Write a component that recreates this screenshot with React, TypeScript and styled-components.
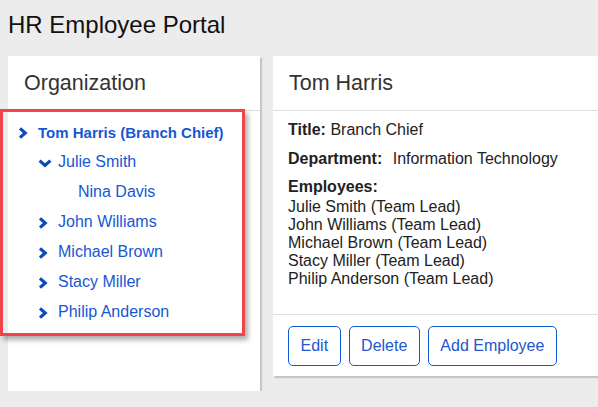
import React from 'react';
import styled, { createGlobalStyle } from 'styled-components';

const GlobalStyle = createGlobalStyle`
  html, body {
    margin: 0;
    background: #ececec;
    font-family: 'Liberation Sans', Arial, sans-serif;
    overflow: hidden;
  }
`;

const Page = styled.div`
  padding: 11px 0 0 8px;
`;

const PageTitle = styled.h1`
  margin: 0 0 17px;
  font-size: 24px;
  font-weight: 400;
  color: #111;
`;

const Columns = styled.div`
  display: flex;
  align-items: flex-start;
  gap: 13px;
`;

const Panel = styled.section<{ $width: number }>`
  width: ${(p) => p.$width}px;
  flex: none;
  background: #fff;
  box-shadow: 2px 2px 1px rgba(0, 0, 0, 0.16);
`;

const PanelHeader = styled.header`
  height: 54px;
  display: flex;
  align-items: center;
  padding: 0 15px 0 16px;
  border-bottom: 1px solid #dedede;
  font-size: 21.5px;
  color: #333;
`;

const TreeBox = styled.div`
  margin: -2px 15px 55px -8px;
  padding: 5px 0 6px 15px;
  border: 3px solid #f2444a;
  box-shadow: 3px 4px 5px rgba(0, 0, 0, 0.32);
  position: relative;
`;

const TreeRow = styled.div<{ $level: number }>`
  height: 30px;
  display: flex;
  align-items: center;
  padding-left: ${(p) => p.$level * 20}px;
`;

const Toggle = styled.span`
  width: 20px;
  flex: none;
  display: flex;
  align-items: center;
  padding-top: 2px;
  color: #0b49bd;
`;

const NodeLabel = styled.a<{ $bold?: boolean }>`
  font-size: ${(p) => (p.$bold ? 15 : 16)}px;
  color: #1657d4;
  text-decoration: none;
  font-weight: ${(p) => (p.$bold ? 700 : 400)};
  cursor: pointer;
`;

const DetailBody = styled.div`
  padding: 10px 15px 26px;
  font-size: 16px;
  color: #222;
`;

const Field = styled.p<{ $after?: number }>`
  margin: 0 0 ${(p) => p.$after ?? 10.5}px;
`;

const Label = styled.b<{ $gap?: number }>`
  margin-right: ${(p) => p.$gap ?? 0}px;
`;

const EmployeeList = styled.div`
  line-height: normal;
`;

const Footer = styled.footer`
  display: flex;
  gap: 8px;
  padding: 11px 15px 10px;
  border-top: 1px solid #dedede;
`;

const Button = styled.button`
  height: 40px;
  padding: 0 11.5px;
  border: 1px solid #0d5bd6;
  border-radius: 5px;
  background: #fff;
  color: #2456cf;
  font-family: 'Liberation Sans', Arial, sans-serif;
  font-size: 16px;
  cursor: pointer;
`;

const ChevronRight = () => (
  <svg width="10" height="12" viewBox="0 0 10 12">
    <polyline points="2,1.4 7.2,6 2,10.6" fill="none" stroke="currentColor" strokeWidth="3.2" />
  </svg>
);

const ChevronDown = () => (
  <svg width="14" height="9" viewBox="0 0 14 9">
    <polyline points="1.6,1.6 7,6.4 12.4,1.6" fill="none" stroke="currentColor" strokeWidth="3.2" />
  </svg>
);

type Node = { name: string; level: number; state?: 'open' | 'closed'; bold?: boolean };

const tree: Node[] = [
  { name: 'Tom Harris (Branch Chief)', level: 0, state: 'closed', bold: true },
  { name: 'Julie Smith', level: 1, state: 'open' },
  { name: 'Nina Davis', level: 2 },
  { name: 'John Williams', level: 1, state: 'closed' },
  { name: 'Michael Brown', level: 1, state: 'closed' },
  { name: 'Stacy Miller', level: 1, state: 'closed' },
  { name: 'Philip Anderson', level: 1, state: 'closed' },
];

const employees = [
  'Julie Smith (Team Lead)',
  'John Williams (Team Lead)',
  'Michael Brown (Team Lead)',
  'Stacy Miller (Team Lead)',
  'Philip Anderson (Team Lead)',
];

const App = () => (
  <Page>
    <GlobalStyle />
    <PageTitle>HR Employee Portal</PageTitle>
    <Columns>
      <Panel $width={252}>
        <PanelHeader>Organization</PanelHeader>
        <TreeBox>
          {tree.map((n) => (
            <TreeRow key={n.name} $level={n.level}>
              <Toggle>
                {n.state === 'closed' && <ChevronRight />}
                {n.state === 'open' && <ChevronDown />}
              </Toggle>
              <NodeLabel $bold={n.bold}>{n.name}</NodeLabel>
            </TreeRow>
          ))}
        </TreeBox>
      </Panel>
      <Panel $width={325}>
        <PanelHeader>Tom Harris</PanelHeader>
        <DetailBody>
          <Field>
            <Label>Title:</Label> Branch Chief
          </Field>
          <Field>
            <Label $gap={6}>Department:</Label> Information Technology
          </Field>
          <Field $after={2}>
            <Label>Employees:</Label>
          </Field>
          <EmployeeList>
            {employees.map((e) => (
              <div key={e}>{e}</div>
            ))}
          </EmployeeList>
        </DetailBody>
        <Footer>
          <Button>Edit</Button>
          <Button>Delete</Button>
          <Button>Add Employee</Button>
        </Footer>
      </Panel>
    </Columns>
  </Page>
);

export default App;
